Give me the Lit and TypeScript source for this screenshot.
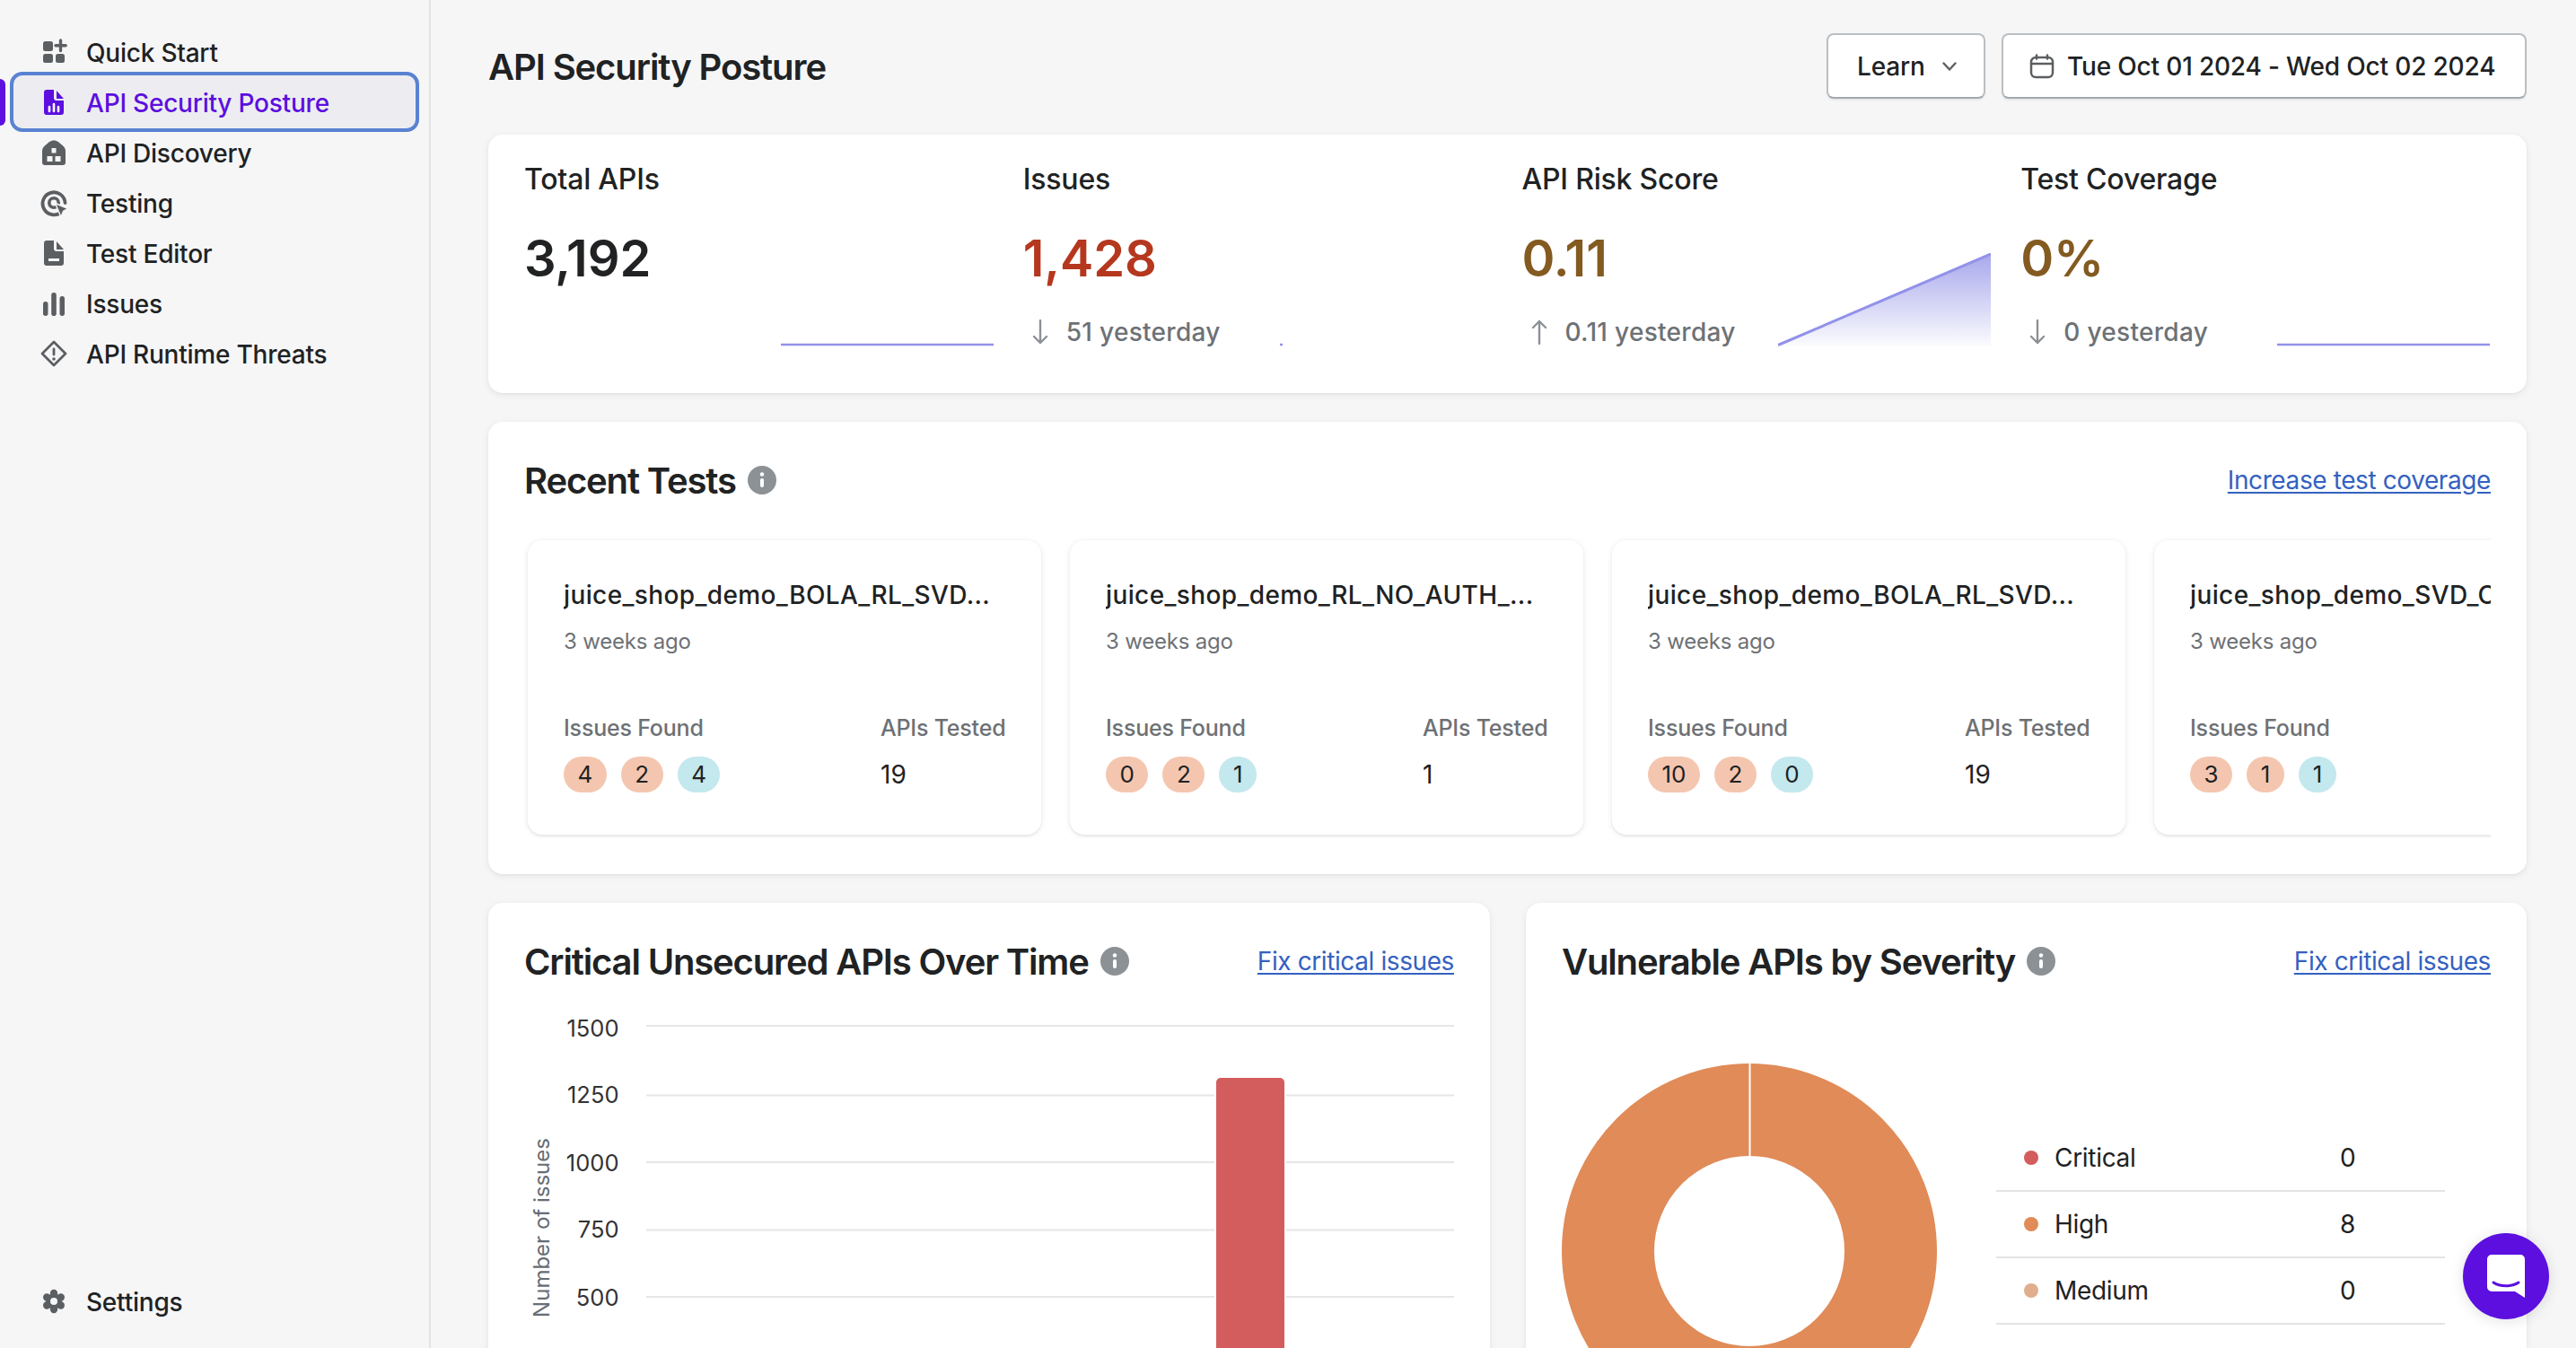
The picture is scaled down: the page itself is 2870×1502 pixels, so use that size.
import { LitElement, html, css, svg } from "lit";
import { customElement } from "lit/decorators.js";

const icons: Record<string, any> = {
  quick: svg`<rect x="2" y="2" width="11" height="11" rx="2.5"/><rect x="2" y="16" width="11" height="10" rx="2.5"/><rect x="16" y="16" width="10" height="10" rx="2.5"/><path d="M21.5 1v11.5M16 6.8h11.2" stroke="currentColor" stroke-width="3.4" stroke-linecap="round" fill="none"/>`,
  posture: svg`<path d="M6 0h8v9a3 3 0 0 0 3 3h8v13a3 3 0 0 1-3 3H6a3 3 0 0 1-3-3V3a3 3 0 0 1 3-3z"/><path d="M17 1l8 9h-8z"/><path d="M9 19v5M14 16v8M19 19v5" stroke="#fff" stroke-width="2.6" stroke-linecap="round" fill="none"/>`,
  discovery: svg`<path fill-rule="evenodd" d="M14 .5C18 .5 20 3 23 5.5c2 1.7 4 3.5 4 6.5v13a3 3 0 0 1-3 3H4a3 3 0 0 1-3-3V12c0-3 2-4.800 4-6.500C8 3 10 .5 14 .5zM11.500 9v5.500h5V9zM6.500 18v6h6v-6zM15.500 18v6h6v-6z"/>`,
  testing: svg`<path d="M22.500 24A12.500 12.500 0 1 1 26.500 14" fill="none" stroke="currentColor" stroke-width="3.800" stroke-linecap="round"/><circle cx="14" cy="14" r="5.200" fill="none" stroke="currentColor" stroke-width="3.600"/><path d="M15.500 14.500L30 20.500l-5.500 3L22 30z" stroke="#f6f6f7" stroke-width="1.500" stroke-linejoin="round"/>`,
  editor: svg`<path fill-rule="evenodd" d="M6 0h8v9a3 3 0 0 0 3 3h8v13a3 3 0 0 1-3 3H6a3 3 0 0 1-3-3V3a3 3 0 0 1 3-3zM8 20v3h12v-3z"/><path d="M17 1l8 9h-8z"/>`,
  issues: svg`<rect x="2" y="12" width="5.500" height="16" rx="2.700"/><rect x="11.200" y="2" width="5.600" height="26" rx="2.800"/><rect x="20.500" y="6" width="5.500" height="22" rx="2.700"/>`,
  threats: svg`<path d="M14 1L27 14 14 27 1 14z" fill="none" stroke="currentColor" stroke-width="2.800" stroke-linejoin="round"/><rect x="12.600" y="7.500" width="2.800" height="9" rx="1.400"/><circle cx="14" cy="20" r="1.800"/>`,
  settings: svg`<circle cx="14" cy="14" r="9"/><circle cx="14" cy="5" r="4.200"/><circle cx="14" cy="23" r="4.200"/><circle cx="6.200" cy="9.500" r="4.200"/><circle cx="21.800" cy="9.500" r="4.200"/><circle cx="6.200" cy="18.500" r="4.200"/><circle cx="21.800" cy="18.500" r="4.200"/><circle cx="14" cy="14" r="4" fill="#f6f6f7"/>`,
};

const nav = [
  { key: "quick", label: "Quick Start" },
  { key: "posture", label: "API Security Posture", active: true },
  { key: "discovery", label: "API Discovery" },
  { key: "testing", label: "Testing" },
  { key: "editor", label: "Test Editor" },
  { key: "issues", label: "Issues" },
  { key: "threats", label: "API Runtime Threats" },
];

const stats = [
  { label: "Total APIs", value: "3,192", color: "#202223", dir: "", delta: "", spark: "flat" },
  { label: "Issues", value: "1,428", color: "#b5371e", dir: "down", delta: "51 yesterday", spark: "dot" },
  { label: "API Risk Score", value: "0.11", color: "#835a20", dir: "up", delta: "0.11 yesterday", spark: "rise" },
  { label: "Test Coverage", value: "0%", color: "#835a20", dir: "down", delta: "0 yesterday", spark: "flat" },
];

const tests = [
  { name: "juice_shop_demo_BOLA_RL_SVD", b: ["4", "2", "4"], apis: "19" },
  { name: "juice_shop_demo_RL_NO_AUTH_", b: ["0", "2", "1"], apis: "1" },
  { name: "juice_shop_demo_BOLA_RL_SVD", b: ["10", "2", "0"], apis: "19" },
  { name: "juice_shop_demo_SVD_CSRF_BOLA_SSRF_XSS_RL", b: ["3", "1", "1"], apis: "" },
];

const legend = [
  { label: "Critical", value: "0", color: "#d35c5c" },
  { label: "High", value: "8", color: "#e08b58" },
  { label: "Medium", value: "0", color: "#e0ae8c" },
];

const grid = [
  { y: 33, t: "1500", ty: 45 },
  { y: 110.5, t: "1250", ty: 119 },
  { y: 185, t: "1000", ty: 195 },
  { y: 260.5, t: "750", ty: 269 },
  { y: 335, t: "500", ty: 345 },
];

@customElement("app-root")
export class AppRoot extends LitElement {
  static styles = css`
    :host {
      display: flex;
      width: 100%;
      height: 100vh;
      overflow: hidden;
      position: relative;
      background: #f6f6f7;
      color: #202223;
      font-family: Inter, "Liberation Sans", sans-serif;
    }
    * { box-sizing: border-box; }
    .sidebar {
      flex: 0 0 480px;
      border-right: 2px solid #e1e3e5;
      padding: 30px 0 24px;
      display: flex;
      flex-direction: column;
      justify-content: space-between;
    }
    .item {
      position: relative;
      height: 56px;
      display: flex;
      align-items: center;
      gap: 22px;
      padding-left: 46px;
      font-size: 28px;
      line-height: 36px;
      font-weight: 450;
      letter-spacing: -0.22px;
    }
    .item span { padding-top: 2px; }
    .item svg { width: 28px; height: 28px; flex: none; color: #5c5f62; fill: currentColor; overflow: visible; }
    .item.active { color: #5c0fdf; }
    .item.active svg { color: #5c0fdf; }
    .item.active::before {
      content: "";
      position: absolute;
      left: 11px;
      right: 11px;
      top: -6px;
      bottom: -5px;
      border: 4px solid #5a82d2;
      border-radius: 14px;
      background: #ededf1;
      z-index: -1;
    }
    .item.active::after {
      content: "";
      position: absolute;
      left: 0;
      top: 2px;
      width: 6px;
      height: 52px;
      background: #5c0fdf;
      border-radius: 0 6px 6px 0;
    }
    nav { position: relative; z-index: 0; }
    main {
      flex: 1;
      min-width: 0;
      padding: 37px 55px 0 64px;
      display: flex;
      flex-direction: column;
      gap: 32px;
    }
    main > * { flex: none; }
    .top {
      height: 73px;
      margin-bottom: 8px;
      display: flex;
      align-items: center;
      justify-content: space-between;
    }
    h1, h2 { margin: 0; font-size: 40px; line-height: 52px; font-weight: 600; letter-spacing: -1.15px; padding-top: 1px; }
    h1 { letter-spacing: -1.1px; padding-top: 3px; }
    .actions { display: flex; gap: 18px; }
    .btn {
      height: 73px;
      display: flex;
      align-items: center;
      background: #fff;
      border: 2px solid #babfc3;
      border-bottom-color: #a3a8ad;
      border-radius: 8px;
      font-size: 28px;
      font-weight: 450;
      letter-spacing: -0.17px;
      box-shadow: 0 2px 2px rgba(0, 0, 0, 0.06);
    }
    .learn { width: 177px; padding-left: 32px; gap: 18px; }
    .date { width: 585px; padding-left: 29px; gap: 14px; }
    .card {
      background: #fff;
      border-radius: 16px;
      box-shadow: 0 2px 8px rgba(23, 24, 24, 0.07), 0 1px 2px rgba(0, 0, 0, 0.05);
    }
    .stats {
      height: 288px;
      padding: 30px 40px 50px;
      display: grid;
      grid-template-columns: repeat(4, 1fr);
      gap: 32px;
    }
    .stat { display: flex; min-width: 0; }
    .stat-text { flex: 1; min-width: 0; }
    .stat-label { font-size: 32px; line-height: 40px; font-weight: 500; letter-spacing: -0.2px; }
    .stat-value { margin-top: 34px; font-size: 56px; line-height: 68px; font-weight: 600; letter-spacing: -0.1px; }
    .delta {
      margin-top: 30px;
      height: 36px;
      display: flex;
      align-items: center;
      gap: 20px;
      padding-left: 10px;
      color: #6d7175;
      font-size: 28px;
      font-weight: 500;
      letter-spacing: 0.3px;
      white-space: nowrap;
    }
    .delta svg { width: 18px; height: 28px; flex: none; }
    .spark { width: 237px; height: 104px; flex: none; align-self: flex-end; margin: 0 1px 2px 0; }
    .recent { height: 504px; padding: 39px 40px 0; }
    .head { height: 52px; display: flex; align-items: center; justify-content: space-between; }
    .title { display: flex; align-items: center; gap: 13px; }
    .info { width: 32px; height: 32px; flex: none; }
    a { color: #3461c1; font-size: 28px; line-height: 36px; letter-spacing: -0.4px; text-decoration: underline; text-underline-offset: 3px; }
    .scroller {
      margin-top: 37px;
      height: 336px;
      padding: 4px;
      display: flex;
      gap: 32px;
      overflow: hidden;
    }
    .test {
      flex: 0 0 572px;
      height: 328px;
      padding: 43px 0 0 40px;
      background: #fff;
      border-radius: 16px;
      box-shadow: 0 1px 6px rgba(23, 24, 24, 0.1), 0 2px 2px rgba(0, 0, 0, 0.04);
    }
    .test-name {
      width: 490px;
      font-size: 28px;
      line-height: 36px;
      font-weight: 500;
      letter-spacing: 0.38px;
      white-space: nowrap;
      overflow: hidden;
    }
    .test-time { margin-top: 18px; font-size: 24px; line-height: 32px; letter-spacing: -0.2px; color: #6d7175; }
    .foot { margin-top: 64px; display: grid; grid-template-columns: 353px 1fr; }
    .foot-label { font-size: 25px; line-height: 32px; font-weight: 500; letter-spacing: -0.2px; color: #6d7175; white-space: nowrap; }
    .foot-val { margin-top: 15px; height: 40px; display: flex; align-items: center; gap: 16px; font-size: 28px; padding-top: 1px; }
    .badge {
      height: 40px;
      min-width: 42px;
      padding: 0 15.5px;
      border-radius: 20px;
      display: flex;
      align-items: center;
      justify-content: center;
      font-size: 26px;
    }
    .sev { background: #f4c6b0; }
    .low { background: #c3e8ed; }
    .charts { display: grid; grid-template-columns: 1fr 1fr; gap: 40px; }
    .chart { height: 800px; padding: 39px 40px 0; }
    .plot { display: block; margin-top: 13px; width: 1036px; height: 480px; }
    .plot text { font-family: Inter, "Liberation Sans", sans-serif; }
    .sev-body { margin-top: 88px; display: flex; align-items: flex-start; gap: 66px; }
    .donut { width: 418px; height: 418px; flex: none; }
    .legend { margin-top: 69px; width: 500px; }
    .row {
      height: 74px;
      border-bottom: 2px solid #e1e3e5;
      padding-left: 31px;
      display: grid;
      grid-template-columns: 16px 300px 1fr;
      column-gap: 18px;
      align-items: center;
      font-size: 28px;
      letter-spacing: -0.3px;
    }
    .dot { width: 16px; height: 16px; border-radius: 50%; }
    .bubble {
      position: absolute;
      right: 30px;
      bottom: 32px;
      width: 96px;
      height: 96px;
      border-radius: 50%;
      background: #5c0fdf;
      box-shadow: 0 2px 16px rgba(0, 0, 0, 0.12);
      display: flex;
      align-items: center;
      justify-content: center;
    }
    .bubble svg { width: 42px; height: 48px; }
  `;

  private icon(key: string) {
    return html`<svg viewBox="0 0 28 28">${icons[key]}</svg>`;
  }

  private info() {
    return html`<svg class="info" viewBox="0 0 32 32">
      <circle cx="16" cy="16" r="16" fill="#8c9196" />
      <circle cx="16" cy="9.500" r="2.200" fill="#fff" />
      <rect x="14" y="14" width="4" height="10" rx="2" fill="#fff" />
    </svg>`;
  }

  private arrow(dir: string) {
    if (!dir) return "";
    const d = dir === "down" ? "M9 1v25M2 19l7 7 7-7" : "M9 27V2M2 9l7-7 7 7";
    return html`<svg viewBox="0 0 18 28"><path d=${d} fill="none" stroke="#8c9196" stroke-width="2.400" stroke-linecap="round" stroke-linejoin="round" /></svg>`;
  }

  private spark(kind: string) {
    let body;
    if (kind === "rise") {
      body = svg`<defs><linearGradient id="sg" x1="0" y1="0" x2="0" y2="1"><stop offset="0" stop-color="#a8a8ec"/><stop offset="1" stop-color="#a8a8ec" stop-opacity="0.05"/></linearGradient></defs>
        <path d="M0 103L237 1V103z" fill="url(#sg)"/><path d="M0 102.500L237 1" fill="none" stroke="#9292ea" stroke-width="3"/>`;
    } else if (kind === "flat") {
      body = svg`<path d="M0 102H237" fill="none" stroke="#9292ea" stroke-width="2.500"/>`;
    } else {
      body = svg`<path d="M0 102h3" fill="none" stroke="#9292ea" stroke-width="2.500"/>`;
    }
    return html`<svg class="spark" viewBox="0 0 237 104">${body}</svg>`;
  }

  private navItem(n: { key: string; label: string; active?: boolean }) {
    return html`<div class="item ${n.active ? "active" : ""}">${this.icon(n.key)}<span>${n.label}</span></div>`;
  }

  render() {
    return html`
      <aside class="sidebar">
        <nav>${nav.map((n) => this.navItem(n))}</nav>
        ${this.navItem({ key: "settings", label: "Settings" })}
      </aside>
      <main>
        <header class="top">
          <h1>API Security Posture</h1>
          <div class="actions">
            <div class="btn learn">
              <span>Learn</span>
              <svg width="18" height="12" viewBox="0 0 18 12"><path d="M2.500 2.500l6.500 7 6.500-7" fill="none" stroke="#5c5f62" stroke-width="2.400" stroke-linecap="round" stroke-linejoin="round" /></svg>
            </div>
            <div class="btn date">
              <svg width="28" height="28" viewBox="0 0 28 28"><rect x="2" y="4" width="24" height="22" rx="5" fill="none" stroke="#5c5f62" stroke-width="2.500" /><path d="M2 11h24M8 1.500v4M20 1.500v4" stroke="#5c5f62" stroke-width="2.500" stroke-linecap="round" /></svg>
              <span>Tue Oct 01 2024 - Wed Oct 02 2024</span>
            </div>
          </div>
        </header>

        <section class="card stats">
          ${stats.map(
            (s) => html`<div class="stat">
              <div class="stat-text">
                <div class="stat-label">${s.label}</div>
                <div class="stat-value" style="color:${s.color}">${s.value}</div>
                <div class="delta">${this.arrow(s.dir)}<span>${s.delta}</span></div>
              </div>
              ${this.spark(s.spark)}
            </div>`
          )}
        </section>

        <section class="card recent">
          <div class="head">
            <div class="title"><h2>Recent Tests</h2>${this.info()}</div>
            <a href="#">Increase test coverage</a>
          </div>
          <div class="scroller">
            ${tests.map(
              (t, i) => html`<article class="test">
                <div class="test-name">${t.name}${i < 3 ? "..." : ""}</div>
                <div class="test-time">3 weeks ago</div>
                <div class="foot">
                  <div>
                    <div class="foot-label">Issues Found</div>
                    <div class="foot-val">
                      <span class="badge sev">${t.b[0]}</span>
                      <span class="badge sev">${t.b[1]}</span>
                      <span class="badge low">${t.b[2]}</span>
                    </div>
                  </div>
                  ${t.apis
                    ? html`<div>
                        <div class="foot-label">APIs Tested</div>
                        <div class="foot-val">${t.apis}</div>
                      </div>`
                    : ""}
                </div>
              </article>`
            )}
          </div>
        </section>

        <div class="charts">
          <section class="card chart">
            <div class="head">
              <div class="title"><h2>Critical Unsecured APIs Over Time</h2>${this.info()}</div>
              <a href="#">Fix critical issues</a>
            </div>
            <svg class="plot" viewBox="0 0 1036 480">
              ${grid.map(
                (g) => svg`<path d="M136 ${g.y}H1036" stroke="#e6e6e6" stroke-width="2"/>
                  <text x="105.500" y=${g.ty} text-anchor="end" font-size="25.5" fill="#333">${g.t}</text>`
              )}
              <path d="M770 480V96a6 6 0 0 1 6-6h66a6 6 0 0 1 6 6V480z" fill="#d35d5d" stroke="#fff" stroke-width="2" />
              <text transform="translate(28 258) rotate(-90)" text-anchor="middle" font-size="24" fill="#666d75">Number of issues</text>
            </svg>
          </section>
          <section class="card chart">
            <div class="head">
              <div class="title"><h2>Vulnerable APIs by Severity</h2>${this.info()}</div>
              <a href="#">Fix critical issues</a>
            </div>
            <div class="sev-body">
              <svg class="donut" viewBox="0 0 418 418">
                <circle cx="209" cy="209" r="157.500" fill="none" stroke="#e08b58" stroke-width="103" />
                <path d="M209.500 0V103" stroke="#fff" stroke-width="2" />
              </svg>
              <div class="legend">
                ${legend.map(
                  (l) => html`<div class="row">
                    <span class="dot" style="background:${l.color}"></span>
                    <span>${l.label}</span>
                    <span>${l.value}</span>
                  </div>`
                )}
              </div>
            </div>
          </section>
        </div>
      </main>
      <div class="bubble">
        <svg viewBox="0 0 42 48">
          <path d="M5 0h32a5 5 0 0 1 5 5v43l-11-7H5a5 5 0 0 1-5-5V5a5 5 0 0 1 5-5z" fill="#fff" />
          <path d="M7 31c7 5 21 5 28 0" fill="none" stroke="#5c0fdf" stroke-width="3" stroke-linecap="round" />
        </svg>
      </div>
    `;
  }
}
